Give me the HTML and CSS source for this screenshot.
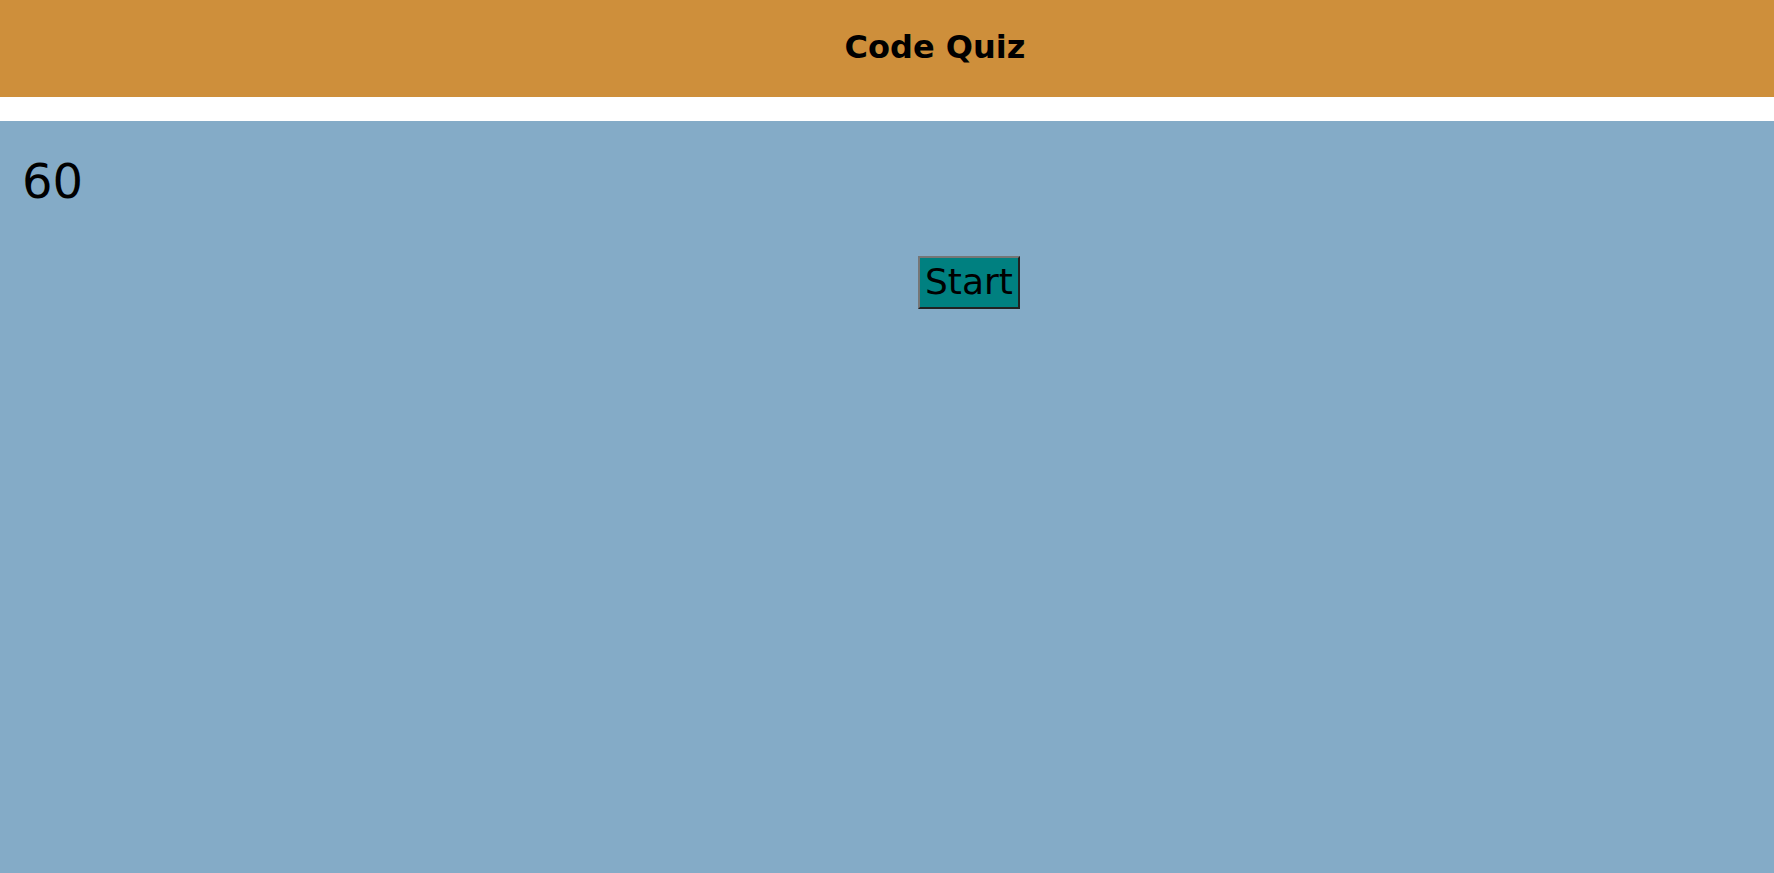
FILE: index.html
```html
<!DOCTYPE html>
<html lang="en">
<head>
<meta charset="utf-8">
<title>Code Quiz</title>
<link rel="stylesheet" href="styles.css">
</head>
<body>
<header class="site-header">
  <h1 class="title">Code Quiz</h1>
</header>
<main class="quiz">
  <div class="timer">60</div>
  <div class="start-row">
    <button class="start-btn" type="button">Start</button>
  </div>
</main>
</body>
</html>
```
FILE: styles.css
```css
html, body {
  margin: 0;
  padding: 0;
}
body {
  font-family: "DejaVu Sans", sans-serif;
  background: #ffffff;
  color: #000;
  min-height: 873px;
  display: flex;
  flex-direction: column;
}
.site-header {
  background: #ce8f3b;
  padding: 29px 0 31px 96px;
  margin-bottom: 24px;
  text-align: center;
}
.title {
  margin: 0;
  font-size: 32px;
  font-weight: bold;
  line-height: 37px;
}
.quiz {
  flex: 1;
  background: #84abc7;
  padding: 32px 22px 0;
}
.timer {
  font-size: 48px;
  line-height: 56px;
}
.start-row {
  margin-top: 47px;
  padding-left: 164px;
  text-align: center;
}
.start-btn {
  font-family: "DejaVu Sans", sans-serif;
  font-size: 36px;
  line-height: 42px;
  color: #000;
  background: #008080;
  border: 2px outset #767676;
  padding: 3px 5px 4px;
  margin: 0;
}
```
